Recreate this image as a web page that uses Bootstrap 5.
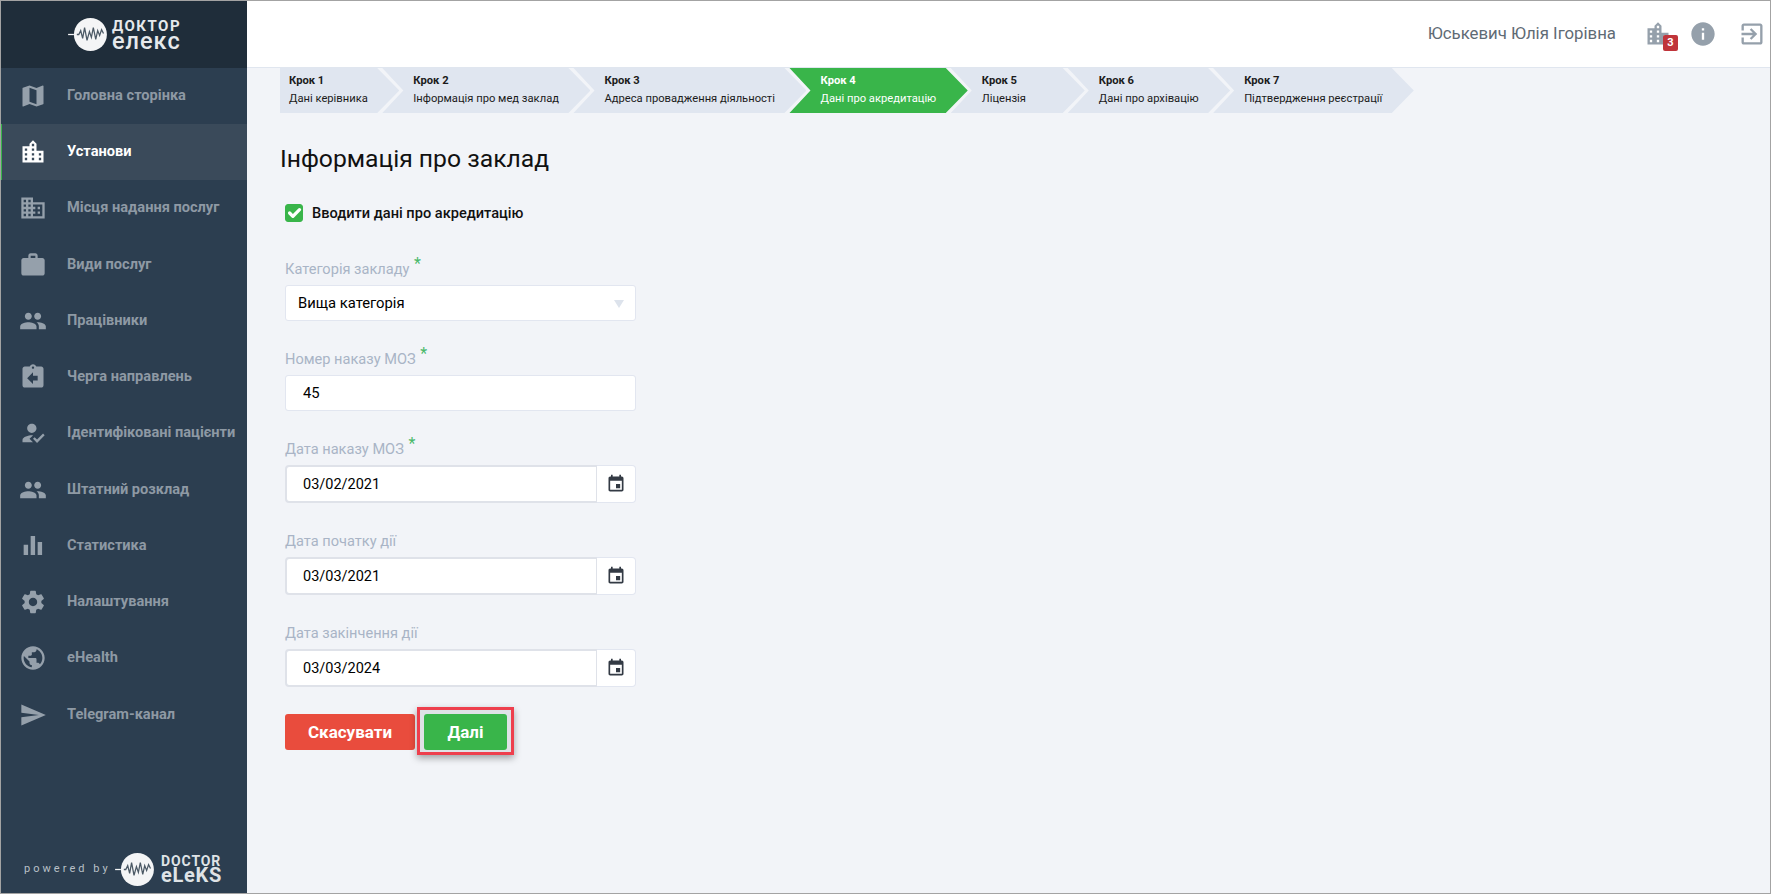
<!DOCTYPE html>
<html lang="uk">
<head>
<meta charset="utf-8">
<title>Доктор Елекс</title>
<link href="https://cdn.jsdelivr.net/npm/bootstrap@5.3.0/dist/css/bootstrap.min.css" rel="stylesheet">
<style>
html,body{height:100%;margin:0}
body{font-family:Roboto,"Liberation Sans",sans-serif;background:#f2f4f8;color:#000;overflow:hidden}
.app-frame{height:894px;border:1px solid #a3a3a3;display:flex;box-sizing:border-box}
.app-side{width:246px;flex:none;background:#2c3e50;display:flex;flex-direction:column}
.side-logo{height:66.8px;flex:none;background:#1f2d3a;display:flex;align-items:center;padding-left:67px;gap:5px;color:#e6e9ec}
.logo-words{display:flex;flex-direction:column;font-weight:700;line-height:1}
.logo-top{font-size:15px;letter-spacing:1.5px;line-height:14px}
.logo-bottom{font-size:23.500px;font-weight:500;letter-spacing:1px;line-height:17px}
.side-item{height:56.25px;display:flex;align-items:center;color:#8e99a4;font-size:14.6px;font-weight:700;text-decoration:none;padding-left:18px;white-space:nowrap}
.side-item svg{width:28px;height:28px;fill:#95a0ab;flex:none;margin-right:20px}
.side-item.on{background:#3a4a5a;color:#fff;box-shadow:inset 1px 0 0 #39b54a}
.side-item.on svg{fill:#fff}
.side-foot{margin-top:auto;height:40px;margin-bottom:4px;display:flex;align-items:center;padding-left:23px}
.foot-txt{font-size:11px;letter-spacing:3.05px;width:91px;flex:none;white-space:nowrap;color:#b9c0c7}
.foot-words{display:flex;flex-direction:column;font-weight:700;color:#dfe3e6;margin-left:7px}
.foot-top{font-size:14px;letter-spacing:.9px;line-height:13px}
.foot-bottom{font-size:20px;letter-spacing:.7px;line-height:15px}
.app-main{flex:1;min-width:0;display:flex;flex-direction:column}
.app-head{height:67px;background:#fff;border-bottom:1px solid #e0e6ef;display:flex;align-items:center;justify-content:flex-end;flex:none;padding-right:4px}
.user-name{font-size:16.8px;color:#5f6b75;margin-right:28px;white-space:nowrap}
.head-ico{fill:#95a0ab;display:block}
.head-slot{position:relative;width:28px;height:28px;margin-right:17px}
.head-gap{margin-right:21px}
.count-tag{position:absolute;left:19px;top:15px;width:15px;height:16px;background:#c0343a;border-radius:2px;color:#fff;font-size:11px;font-weight:700;line-height:16px;text-align:center}
.app-body{padding-left:33px;flex:1}
.step-row{display:flex;height:45px}
.step-box{height:45px;background:#e0e6f0;padding:6px 31.5px 0 31px;margin-left:-17px;font-size:11.2px;line-height:14px;color:#1b1b1b;white-space:nowrap;clip-path:polygon(0 0,calc(100% - 22px) 0,100% 50%,calc(100% - 22px) 100%,0 100%,21px 50%)}
.step-box:first-child{margin-left:0;padding-left:9px;clip-path:polygon(0 0,calc(100% - 22px) 0,100% 50%,calc(100% - 22px) 100%,0 100%)}
.step-box b{display:block;font-weight:700;margin-bottom:4px}
.step-box.now{background:#39b54a;color:#fff}
.step-wide{min-width:134px}
.page-title{font-size:24.7px;font-weight:400;line-height:30px;margin:31px 0 30px;color:#111}
.form-col{width:351px;margin-left:5px}
.accred-check{display:flex;align-items:center;height:18px;min-height:0;margin:0 0 36px;padding:0}
.accred-check .form-check-input{width:18px;height:18px;margin:0 9px 0 0;float:none;background-color:#39b54a;border-color:#39b54a;border-radius:3px;flex:none;background-size:22px;background-position:center}
.accred-check .form-check-label{font-size:14.6px;font-weight:500;color:#111;padding-top:1px}
.field-wrap{margin-bottom:27px}
.field-cap{display:block;font-size:14.6px;line-height:22px;color:#a9b4c6;margin-bottom:5px;white-space:nowrap}
.field-cap i{font-style:normal;color:#49b96a;font-size:16px;line-height:0;position:relative;top:-5px;margin-left:1px}
.field-wrap .form-control,.field-wrap .form-select{height:36px;font-size:14.8px;color:#000;border:1px solid #e2e6f0;border-radius:3px;padding:0 12px;box-shadow:none}
.field-wrap .form-select{background-image:none}
.field-wrap .plain-input{padding-left:17px}
.select-shell{position:relative}
.select-shell::after{content:"";position:absolute;right:12px;top:15px;border-left:5px solid transparent;border-right:5px solid transparent;border-top:8px solid #dde3ec}
.date-line{height:38px;flex-wrap:nowrap}
.field-wrap .date-line .form-control{height:38px;font-size:14.5px;padding:1px 12px 0 16px;border:2px solid #dfe2e9;border-right-width:1px;border-radius:4px 0 0 4px}
.date-line .input-group-text{width:40px;justify-content:center;padding:0;background:#fff;border:1px solid #e2e6f0;border-left:0;border-radius:0 4px 4px 0}
.date-line svg{width:20px;height:20px;fill:#333a44}
.act-row{display:flex;gap:9px;align-items:flex-start}
.act-row .btn{height:36px;font-size:17px;font-weight:700;border:0;border-radius:3px;color:#fff;padding:1px 0 0;display:block}
.btn-stop{width:130px;background:#e94c3d}
.btn-stop:hover{background:#e94c3d}
.mark-frame{display:block;margin:-7px;margin-bottom:-5px;padding:4px 4px 2px;border:3px solid #ee3f4d;background:#dfe2e6;box-shadow:0 3px 7px rgba(0,0,0,.35)}
.btn-go{width:83px;background:#39b54a}
.btn-go:hover{background:#39b54a}
</style>
</head>
<body>
<svg width="0" height="0" class="d-none">
<symbol id="i-map" viewBox="0 0 24 24"><path d="M20.5 3l-.16.03L15 5.1 9 3 3.36 4.9c-.21.07-.36.25-.36.48V20.5c0 .28.22.5.5.5l.16-.03L9 18.9l6 2.1 5.64-1.9c.21-.07.36-.25.36-.48V3.5c0-.28-.22-.5-.5-.5zM15 19l-6-2.11V5l6 2.11V19z"/></symbol>
<symbol id="i-city" viewBox="0 0 24 24"><path d="M15 11V5l-3-3-3 3v2H3v14h18V11h-6zm-8 8H5v-2h2v2zm0-4H5v-2h2v2zm0-4H5V9h2v2zm6 8h-2v-2h2v2zm0-4h-2v-2h2v2zm0-4h-2V9h2v2zm0-4h-2V5h2v2zm6 12h-2v-2h2v2zm0-4h-2v-2h2v2z"/></symbol>
<symbol id="i-domain" viewBox="0 0 24 24"><path d="M12 7V3H2v18h20V7H12zM6 19H4v-2h2v2zm0-4H4v-2h2v2zm0-4H4V9h2v2zm0-4H4V5h2v2zm4 12H8v-2h2v2zm0-4H8v-2h2v2zm0-4H8V9h2v2zm0-4H8V5h2v2zm10 12h-8v-2h2v-2h-2v-2h2v-2h-2V9h8v10zm-2-8h-2v2h2v-2zm0 4h-2v2h2v-2z"/></symbol>
<symbol id="i-work" viewBox="0 0 24 24"><path d="M20 6h-4V4c0-1.11-.89-2-2-2h-4c-1.11 0-2 .89-2 2v2H4c-1.11 0-1.99.89-1.99 2L2 19c0 1.11.89 2 2 2h16c1.11 0 2-.89 2-2V8c0-1.11-.89-2-2-2zm-6 0h-4V4h4v2z"/></symbol>
<symbol id="i-people" viewBox="0 0 24 24"><path d="M16 11c1.66 0 2.99-1.34 2.99-3S17.66 5 16 5c-1.66 0-3 1.34-3 3s1.34 3 3 3zm-8 0c1.66 0 2.99-1.34 2.99-3S9.66 5 8 5C6.34 5 5 6.34 5 8s1.34 3 3 3zm0 2c-2.33 0-7 1.17-7 3.5V19h14v-2.5c0-2.33-4.67-3.5-7-3.5zm8 0c-.29 0-.62.02-.97.05 1.16.84 1.97 1.97 1.97 3.45V19h6v-2.5c0-2.33-4.67-3.5-7-3.5z"/></symbol>
<symbol id="i-return" viewBox="0 0 24 24"><path d="M19 3h-4.18C14.4 1.84 13.3 1 12 1c-1.3 0-2.4.84-2.82 2H5c-1.1 0-2 .9-2 2v14c0 1.1.9 2 2 2h14c1.1 0 2-.9 2-2V5c0-1.1-.9-2-2-2zm-7 0c.55 0 1 .45 1 1s-.45 1-1 1-1-.45-1-1 .45-1 1-1zm4 12h-4v3l-5-5 5-5v3h4v4z"/></symbol>
<symbol id="i-reg" viewBox="0 0 24 24"><path d="M9 17l3-2.94c-.39-.04-.68-.06-1-.06-2.67 0-8 1.34-8 4v2h9l-3-3zm2-5c2.21 0 4-1.79 4-4s-1.79-4-4-4-4 1.79-4 4 1.79 4 4 4zM15.47 20.5L12 17l1.4-1.41 2.07 2.08 5.13-5.17 1.4 1.41z"/></symbol>
<symbol id="i-bars" viewBox="0 0 24 24"><path d="M4 11h3.800v8.700H4zM10 3.400h3.800v16.300H10zM16 8.600h3.800v11.100H16z"/></symbol>
<symbol id="i-gear" viewBox="0 0 24 24"><path d="M19.14 12.94c.04-.3.06-.61.06-.94 0-.32-.02-.64-.07-.94l2.03-1.58c.18-.14.23-.41.12-.61l-1.92-3.32c-.12-.22-.37-.29-.59-.22l-2.39.96c-.5-.38-1.03-.7-1.62-.94l-.36-2.54c-.04-.24-.24-.41-.48-.41h-3.84c-.24 0-.43.17-.47.41l-.36 2.54c-.59.24-1.13.57-1.62.94l-2.39-.96c-.22-.08-.47 0-.59.22L2.74 8.87c-.12.21-.08.47.12.61l2.03 1.58c-.05.3-.09.63-.09.94s.02.64.07.94l-2.03 1.58c-.18.14-.23.41-.12.61l1.92 3.32c.12.22.37.29.59.22l2.39-.96c.5.38 1.03.7 1.62.94l.36 2.54c.05.24.24.41.48.41h3.84c.24 0 .44-.17.47-.41l.36-2.54c.59-.24 1.13-.56 1.62-.94l2.39.96c.22.08.47 0 .59-.22l1.92-3.32c.12-.22.07-.47-.12-.61l-2.01-1.58zM12 15.6c-1.98 0-3.6-1.62-3.6-3.6s1.62-3.6 3.6-3.6 3.6 1.62 3.6 3.6-1.62 3.6-3.6 3.6z"/></symbol>
<symbol id="i-globe" viewBox="0 0 24 24"><path d="M12 2C6.48 2 2 6.48 2 12s4.48 10 10 10 10-4.48 10-10S17.52 2 12 2zm-1 17.93c-3.95-.49-7-3.85-7-7.93 0-.62.08-1.21.21-1.79L9 15v1c0 1.1.9 2 2 2v1.93zm6.9-2.54c-.26-.81-1-1.39-1.9-1.39h-1v-3c0-.55-.45-1-1-1H8v-2h2c.55 0 1-.45 1-1V7h2c1.1 0 2-.9 2-2v-.41c2.93 1.19 5 4.06 5 7.41 0 2.08-.8 3.97-2.1 5.39z"/></symbol>
<symbol id="i-send" viewBox="0 0 24 24"><path d="M2.01 21L23 12 2.01 3 2 10l15 2-15 2z"/></symbol>
<symbol id="i-info" viewBox="0 0 24 24"><path d="M12 2C6.48 2 2 6.48 2 12s4.48 10 10 10 10-4.48 10-10S17.52 2 12 2zm1 15h-2v-6h2v6zm0-8h-2V7h2v2z"/></symbol>
<symbol id="i-exit" viewBox="0 0 24 24"><path d="M10.09 15.59L11.5 17l5-5-5-5-1.41 1.41L12.67 11H3v2h9.67l-2.58 2.59zM19 3H5c-1.11 0-2 .9-2 2v4h2V5h14v14H5v-4H3v4c0 1.1.89 2 2 2h14c1.1 0 2-.9 2-2V5c0-1.1-.9-2-2-2z"/></symbol>
<symbol id="i-event" viewBox="0 0 24 24"><path d="M17 12h-5v5h5v-5zM16 1v2H8V1H6v2H5c-1.11 0-1.99.9-1.99 2L3 19c0 1.1.89 2 2 2h14c1.1 0 2-.9 2-2V5c0-1.1-.9-2-2-2h-1V1h-2zm3 18H5V8h14v11z"/></symbol>
<symbol id="i-wave" viewBox="0 0 40 34"><circle cx="23" cy="17" r="17" fill="#f4f5f6"/><path d="M9 17h2l2-4 2 8 2-11 2.500 13 2.500-9 2 6 2-10 2.500 12 2-9 2 5 2-6 2 4" fill="none" stroke="#4b5965" stroke-width="1.300"/><path d="M0 17h6" stroke="#f4f5f6" stroke-width="1.300"/></symbol>
</svg>
<div class="app-frame">
  <aside class="app-side">
    <div class="side-logo">
      <svg width="39" height="33"><use href="#i-wave"/></svg>
      <div class="logo-words"><span class="logo-top">ДОКТОР</span><span class="logo-bottom">елекс</span></div>
    </div>
    <nav class="d-flex flex-column">
      <a class="side-item" href="#"><svg><use href="#i-map"/></svg>Головна сторінка</a>
      <a class="side-item on" href="#"><svg><use href="#i-city"/></svg>Установи</a>
      <a class="side-item" href="#"><svg><use href="#i-domain"/></svg>Місця надання послуг</a>
      <a class="side-item" href="#"><svg><use href="#i-work"/></svg>Види послуг</a>
      <a class="side-item" href="#"><svg><use href="#i-people"/></svg>Працівники</a>
      <a class="side-item" href="#"><svg><use href="#i-return"/></svg>Черга направлень</a>
      <a class="side-item" href="#"><svg><use href="#i-reg"/></svg>Ідентифіковані пацієнти</a>
      <a class="side-item" href="#"><svg><use href="#i-people"/></svg>Штатний розклад</a>
      <a class="side-item" href="#"><svg><use href="#i-bars"/></svg>Статистика</a>
      <a class="side-item" href="#"><svg><use href="#i-gear"/></svg>Налаштування</a>
      <a class="side-item" href="#"><svg><use href="#i-globe"/></svg>eHealth</a>
      <a class="side-item" href="#"><svg><use href="#i-send"/></svg>Telegram-канал</a>
    </nav>
    <div class="side-foot">
      <span class="foot-txt">powered by</span>
      <svg width="39" height="33" class="flex-none"><use href="#i-wave"/></svg>
      <div class="foot-words"><span class="foot-top">DOCTOR</span><span class="foot-bottom">eLeKS</span></div>
    </div>
  </aside>
  <div class="app-main">
    <header class="app-head">
      <span class="user-name">Юськевич Юлія Ігорівна</span>
      <div class="head-slot"><svg class="head-ico" width="28" height="28"><use href="#i-city"/></svg><span class="count-tag">3</span></div>
      <svg class="head-ico head-gap" width="28" height="28"><use href="#i-info"/></svg>
      <svg class="head-ico" width="28" height="28"><use href="#i-exit"/></svg>
    </header>
    <main class="app-body">
      <div class="step-row">
        <div class="step-box"><b>Крок 1</b>Дані керівника</div>
        <div class="step-box"><b>Крок 2</b>Інформація про мед заклад</div>
        <div class="step-box"><b>Крок 3</b>Адреса провадження діяльності</div>
        <div class="step-box now"><b>Крок 4</b>Дані про акредитацію</div>
        <div class="step-box step-wide"><b>Крок 5</b>Ліцензія</div>
        <div class="step-box"><b>Крок 6</b>Дані про архівацію</div>
        <div class="step-box"><b>Крок 7</b>Підтвердження реєстрації</div>
      </div>
      <h1 class="page-title">Інформація про заклад</h1>
      <form class="form-col">
        <div class="form-check accred-check">
          <input class="form-check-input" type="checkbox" id="acc" checked>
          <label class="form-check-label" for="acc">Вводити дані про акредитацію</label>
        </div>
        <div class="field-wrap">
          <label class="field-cap">Категорія закладу <i>*</i></label>
          <div class="select-shell"><select class="form-select"><option>Вища категорія</option></select></div>
        </div>
        <div class="field-wrap">
          <label class="field-cap">Номер наказу МОЗ <i>*</i></label>
          <input class="form-control plain-input" type="text" value="45">
        </div>
        <div class="field-wrap">
          <label class="field-cap">Дата наказу МОЗ <i>*</i></label>
          <div class="input-group date-line"><input class="form-control" type="text" value="03/02/2021"><span class="input-group-text"><svg><use href="#i-event"/></svg></span></div>
        </div>
        <div class="field-wrap">
          <label class="field-cap">Дата початку дії</label>
          <div class="input-group date-line"><input class="form-control" type="text" value="03/03/2021"><span class="input-group-text"><svg><use href="#i-event"/></svg></span></div>
        </div>
        <div class="field-wrap">
          <label class="field-cap">Дата закінчення дії</label>
          <div class="input-group date-line"><input class="form-control" type="text" value="03/03/2024"><span class="input-group-text"><svg><use href="#i-event"/></svg></span></div>
        </div>
        <div class="act-row">
          <button type="button" class="btn btn-stop">Скасувати</button>
          <span class="mark-frame"><button type="button" class="btn btn-go">Далі</button></span>
        </div>
      </form>
    </main>
  </div>
</div>
<script src="https://cdn.jsdelivr.net/npm/bootstrap@5.3.0/dist/js/bootstrap.bundle.min.js"></script>
</body>
</html>
